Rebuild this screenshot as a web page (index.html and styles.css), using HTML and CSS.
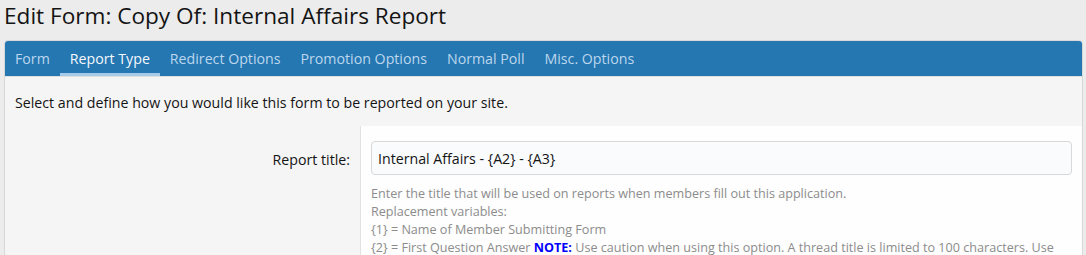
FILE: index.html
```html
<!DOCTYPE html>
<html lang="en">
<head>
    <meta charset="UTF-8">
    <title>Edit Form: Copy Of: Internal Affairs Report</title>
    <link rel="stylesheet" href="styles.css">
</head>
<body>
    <h1 class="page-title">Edit Form: Copy Of: Internal Affairs Report</h1>

    <div class="block">
        <ul class="tabs">
            <li class="tab">Form</li>
            <li class="tab is-active">Report Type</li>
            <li class="tab">Redirect Options</li>
            <li class="tab">Promotion Options</li>
            <li class="tab">Normal Poll</li>
            <li class="tab">Misc. Options</li>
        </ul>

        <div class="block-body">
            <div class="block-row">
                Select and define how you would like this form to be reported on your site.
            </div>

            <dl class="form-row">
                <dt class="form-label">Report title:</dt>
                <dd class="form-field">
                    <input type="text" class="input" value="Internal Affairs - {A2} - {A3}">
                    <div class="explain">
                        Enter the title that will be used on reports when members fill out this application.<br>
                        Replacement variables:<br>
                        {1} = Name of Member Submitting Form<br>
                        {2} = First Question Answer <span class="note">NOTE:</span> Use caution when using this option. A thread title is limited to 100 characters. Use
                        with care.<br>
                        {3} = Second Question Answer
                    </div>
                </dd>
            </dl>
        </div>
    </div>
</body>
</html>
```

FILE: styles.css
```css
body {
    font-family: 'Open Sans', 'Segoe UI', sans-serif;
    font-size: 14.2px;
    margin: 0;
    padding: 0 3px 0 4px;
    background: #ececec;
    color: #141414;
    overflow: hidden;
}

.page-title {
    font-size: 22.6px;
    font-weight: 400;
    line-height: 30px;
    margin: 0;
    padding: 1px 0 9px 0;
    color: #141414;
}

.block {
    border: 1px solid #d8d8d8;
    border-radius: 4px;
    background: #f5f5f5;
}

.tabs {
    display: flex;
    list-style: none;
    margin: 0;
    padding: 0;
    background: #2577b1;
    border-radius: 3px 3px 0 0;
    border-bottom: 1px solid #dfdfdf;
}

.tab {
    padding: 8px 10px 4px 10px;
    line-height: 20px;
    color: #bcd6ee;
    border-bottom: 3px solid transparent;
}

.tab.is-active {
    color: #f4f8fc;
    border-bottom-color: #a5cbe9;
}

.block-row {
    padding: 15px 10px 13px 10px;
    line-height: 21px;
}

.form-row {
    display: flex;
    margin: 0;
}

.form-label {
    flex: 0 0 345px;
    text-align: right;
    padding: 24px 10px 0 0;
    line-height: 20px;
}

.form-field {
    flex: 1;
    margin: 0;
    padding: 15px 10px 0 10px;
    background: #fefefe;
    border-left: 1px solid #e2e2e2;
}

.input {
    display: block;
    width: 100%;
    box-sizing: border-box;
    height: 34px;
    padding: 0 6px;
    font-family: inherit;
    font-size: 14.2px;
    color: #141414;
    background: #f9fbfd;
    border: 1px solid #d8d8d8;
    border-radius: 4px;
}

.explain {
    margin-top: 10px;
    font-size: 12.6px;
    line-height: 18px;
    color: #8c8c8c;
}

.note {
    color: #0000ff;
    font-weight: 700;
}
```
